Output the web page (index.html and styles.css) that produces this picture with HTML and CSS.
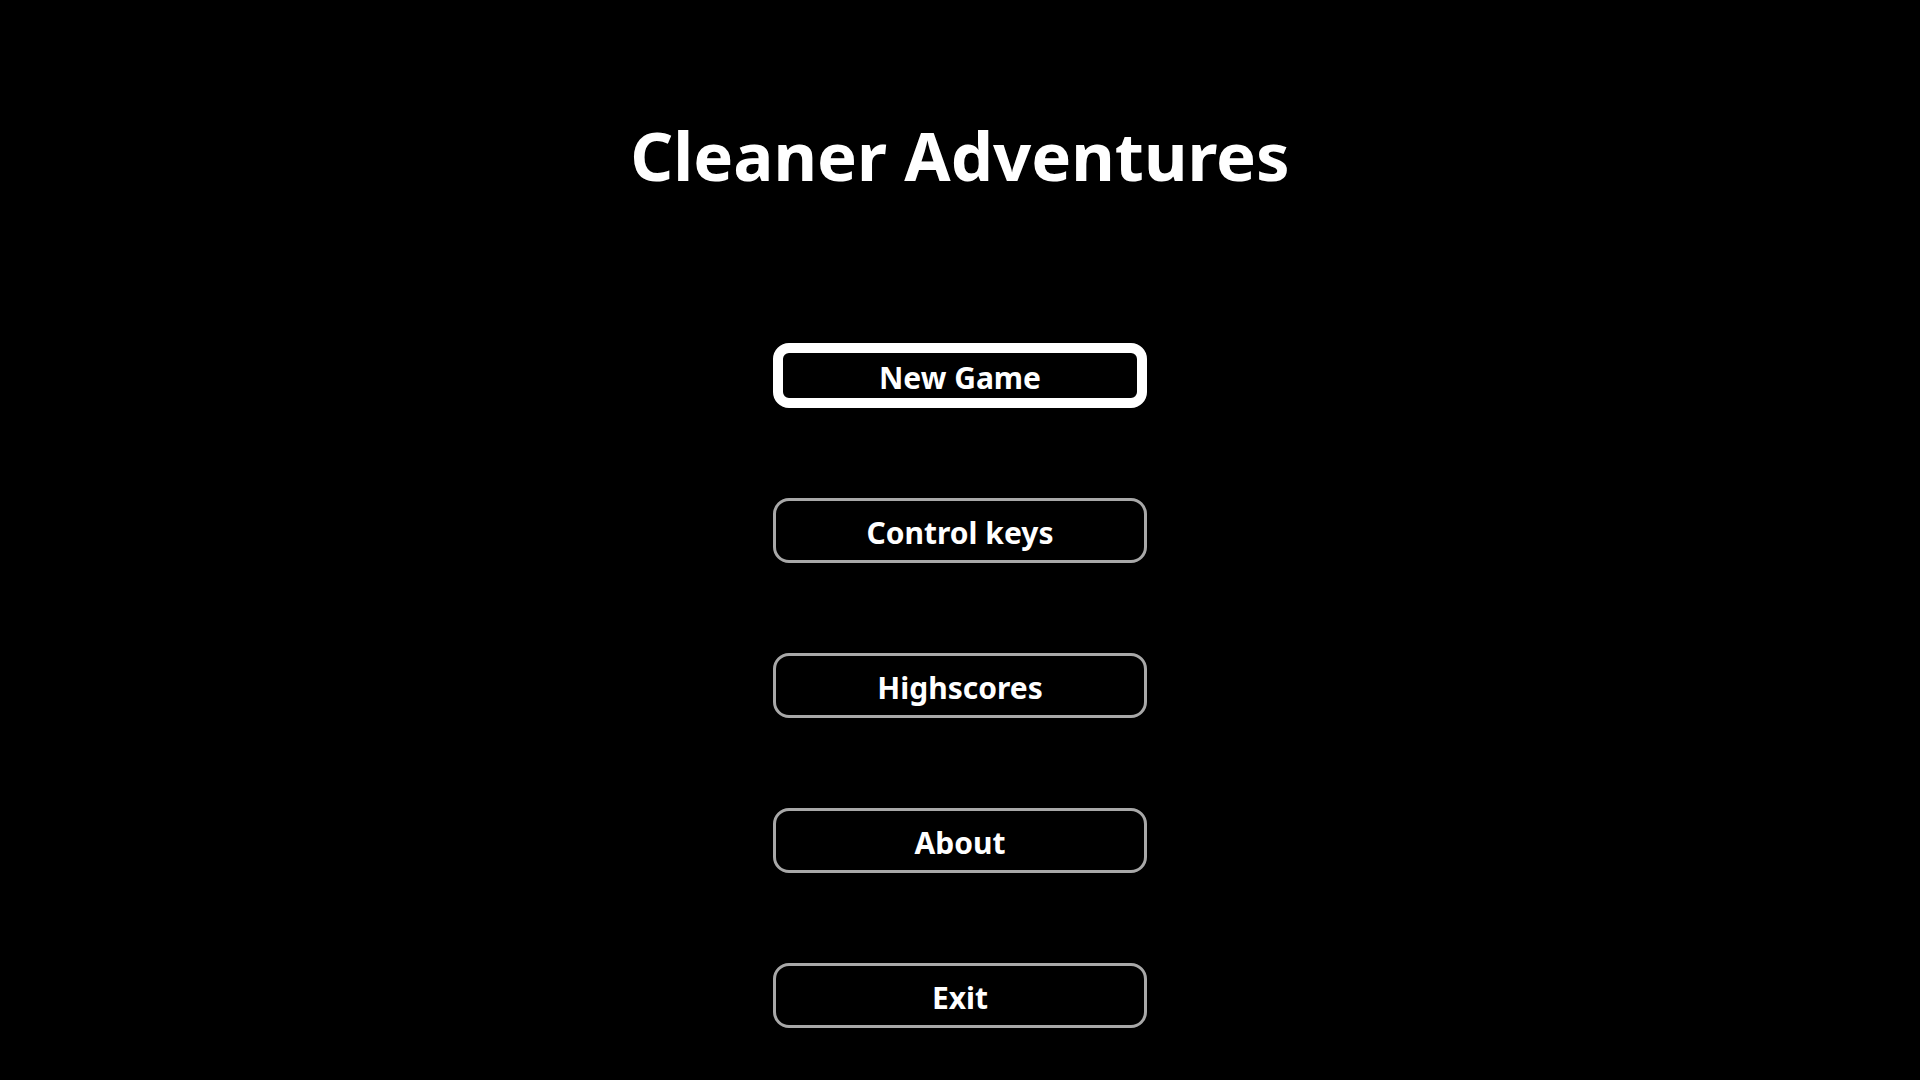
FILE: index.html
```html
<!DOCTYPE html>
<html>
<head>
<meta charset="utf-8">
<link rel="stylesheet" href="styles.css">
</head>
<body>
<main class="menu">
  <h1 class="title">Cleaner Adventures</h1>
  <nav class="buttons">
    <button class="btn btn-active">New Game</button>
    <button class="btn">Control keys</button>
    <button class="btn">Highscores</button>
    <button class="btn">About</button>
    <button class="btn">Exit</button>
  </nav>
</main>
</body>
</html>
```
FILE: styles.css
```css
html, body {
  margin: 0;
  padding: 0;
  background: #000;
  height: 100%;
}
.menu {
  display: flex;
  flex-direction: column;
  align-items: center;
  font-family: "Noto Sans", "Open Sans", sans-serif;
  color: #fff;
}
.title {
  margin: 110px 0 0 0;
  font-size: 67px;
  line-height: 90px;
  font-weight: 700;
}
.buttons {
  display: flex;
  flex-direction: column;
  gap: 90px;
  margin-top: 143px;
}
.btn {
  box-sizing: border-box;
  width: 374px;
  height: 65px;
  background: #000;
  color: #fff;
  border: 3px solid #a8a8a8;
  border-radius: 16px;
  font-family: "Noto Sans", "Open Sans", sans-serif;
  font-weight: 700;
  font-size: 30px;
  padding: 4px 0 0 0;
}
.btn-active {
  border: 10px solid #fff;
}
```
